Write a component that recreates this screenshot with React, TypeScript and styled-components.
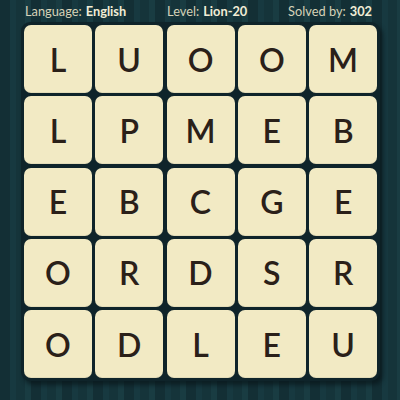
import React from 'react';
import styled, { createGlobalStyle } from 'styled-components';

const GlobalStyle = createGlobalStyle`
  html, body {
    margin: 0;
    padding: 0;
  }
  body {
    width: 400px;
    height: 400px;
    overflow: hidden;
    font-family: Lato, "Open Sans", sans-serif;
    background-color: #15333a;
    background-image: repeating-linear-gradient(
      90deg,
      #132f35 0px,
      #132f35 10px,
      #173940 10px,
      #173940 16px,
      #15343a 16px,
      #15343a 25px,
      #193c42 25px,
      #193c42 31px
    );
  }
`;

const Page = styled.div`
  width: 400px;
  height: 400px;
  display: flex;
  flex-direction: column;
  align-items: center;
`;

const Header = styled.div`
  width: 100%;
  box-sizing: border-box;
  height: 22px;
  display: flex;
  align-items: center;
  justify-content: space-between;
  padding: 0 28px 0 25px;
  font-size: 12.8px;
  color: #d6d2b8;
`;

const Stat = styled.span`
  white-space: nowrap;
`;

const Value = styled.b`
  font-weight: 700;
  color: #f1edd6;
  margin-left: 4px;
`;

const Board = styled.div`
  display: grid;
  grid-template-columns: repeat(5, 68px);
  grid-auto-rows: 68px;
  gap: 3.3px;
  padding: 3px;
  margin-left: 1px;
  background: #0f242a;
  border-radius: 9px;
  box-shadow: 3px 4px 4px rgba(8, 22, 26, 0.7);
`;

const Tile = styled.div`
  display: flex;
  align-items: center;
  justify-content: center;
  background: #f2eac4;
  border-radius: 7px;
  font-size: 32px;
  font-weight: 600;
  color: #2a2019;
  box-shadow: inset 0 -1px 0 rgba(0, 0, 0, 0.06);
`;

const letters = [
  'L', 'U', 'O', 'O', 'M',
  'L', 'P', 'M', 'E', 'B',
  'E', 'B', 'C', 'G', 'E',
  'O', 'R', 'D', 'S', 'R',
  'O', 'D', 'L', 'E', 'U',
];

export default function App() {
  return (
    <Page>
      <GlobalStyle />
      <Header>
        <Stat>Language:<Value>English</Value></Stat>
        <Stat>Level:<Value>Lion-20</Value></Stat>
        <Stat>Solved by:<Value>302</Value></Stat>
      </Header>
      <Board>
        {letters.map((l, i) => (
          <Tile key={i}>{l}</Tile>
        ))}
      </Board>
    </Page>
  );
}
